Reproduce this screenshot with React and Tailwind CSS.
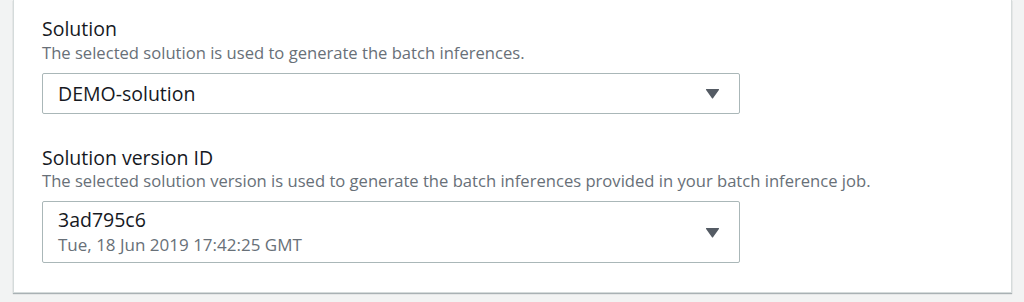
export default function App() {
  const Arrow = () => (
    <svg width="15" height="11" viewBox="0 0 15 11" className="shrink-0">
      <path d="M1.5 1 L13.5 1 Q14.5 1 13.9 2 L8.2 10 Q7.5 11 6.8 10 L1.1 2 Q0.5 1 1.5 1 Z" fill="#545b64" />
    </svg>
  );
  return (
    <div
      className="w-[1024px] h-[302px] bg-[#f2f3f3] overflow-hidden"
      style={{ fontFamily: '"Open Sans", "Noto Sans", Arial, sans-serif' }}
    >
      <div className="ml-[13px] w-[999px] h-[293px] bg-white border-x border-b border-[#d5dbdb] shadow-[0_1px_1px_0_rgba(0,28,36,0.3)] pl-[28px] pt-[17px]">
        <div className="text-[19.5px] leading-[24px] text-[#16191f]">Solution</div>
        <div className="mt-[1px] text-[16.6px] leading-[22px] text-[#687078]">
          The selected solution is used to generate the batch inferences.
        </div>
        <div className="mt-[9px] w-[698px] h-[41px] border border-[#aab7b8] rounded-[2px] flex items-center justify-between pl-[15px] pr-[19px]">
          <span className="text-[19.5px] leading-[24px] text-[#16191f]">DEMO-solution</span>
          <Arrow />
        </div>
        <div className="mt-[32px] text-[19.5px] leading-[24px] text-[#16191f]">Solution version ID</div>
        <div className="text-[16.6px] leading-[22px] text-[#687078]">
          The selected solution version is used to generate the batch inferences provided in your batch inference job.
        </div>
        <div className="mt-[9px] w-[698px] h-[62px] border border-[#aab7b8] rounded-[2px] flex items-center justify-between pl-[15px] pr-[19px]">
          <div className="flex flex-col gap-[2px]">
            <span className="text-[19.5px] leading-[24px] text-[#16191f]">3ad795c6</span>
            <span className="text-[17px] leading-[22px] text-[#687078]">Tue, 18 Jun 2019 17:42:25 GMT</span>
          </div>
          <Arrow />
        </div>
      </div>
    </div>
  );
}
